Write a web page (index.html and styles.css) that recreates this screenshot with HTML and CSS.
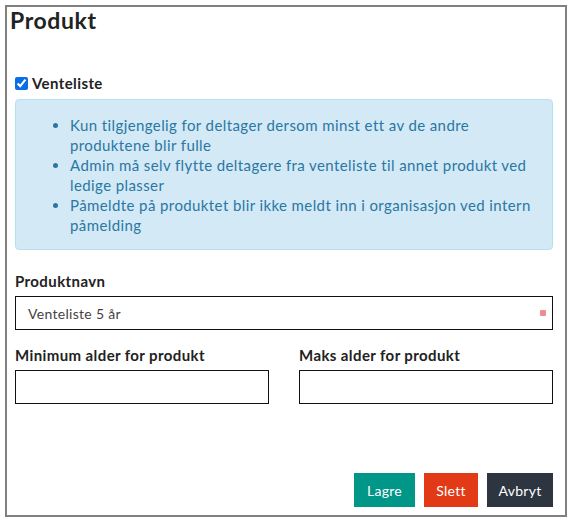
FILE: index.html
```html
<!DOCTYPE html>
<html lang="no">
<head>
<meta charset="utf-8">
<link rel="stylesheet" href="styles.css">
</head>
<body>
<div class="dialog">
  <h1 class="title">Produkt</h1>
  <label class="check">
    <input type="checkbox" checked>
    <span>Venteliste</span>
  </label>
  <div class="alert">
    <ul>
      <li>Kun tilgjengelig for deltager dersom minst ett av de andre produktene blir fulle</li>
      <li>Admin må selv flytte deltagere fra venteliste til annet produkt ved ledige plasser</li>
      <li>Påmeldte på produktet blir ikke meldt inn i organisasjon ved intern påmelding</li>
    </ul>
  </div>
  <div class="field">
    <label class="label">Produktnavn</label>
    <div class="input-wrap">
      <input class="input" type="text" value="Venteliste 5 år">
      <span class="req"></span>
    </div>
  </div>
  <div class="row">
    <div class="field">
      <label class="label">Minimum alder for produkt</label>
      <input class="input" type="text">
    </div>
    <div class="field">
      <label class="label">Maks alder for produkt</label>
      <input class="input" type="text">
    </div>
  </div>
  <div class="actions">
    <button class="btn btn-save">Lagre</button>
    <button class="btn btn-delete">Slett</button>
    <button class="btn btn-cancel">Avbryt</button>
  </div>
</div>
</body>
</html>
```
FILE: styles.css
```css
* { box-sizing: border-box; }
html, body { margin: 0; padding: 0; background: #fff; }
body { font-family: Lato, "Open Sans", sans-serif; color: #333; letter-spacing: 0.4px; }
.dialog {
  margin: 5px;
  width: 562px;
  height: 512px;
  border: 2px solid #808080;
  padding: 0 12px 0 8px;
  display: flex;
  flex-direction: column;
}
.title {
  margin: 0 0 0 -5px;
  font-size: 23px;
  font-weight: 700;
  color: #222;
  line-height: 26px;
  letter-spacing: 0.6px;
  height: 65px;
}
.check {
  display: flex;
  align-items: center;
  gap: 4px;
  font-weight: 700;
  font-size: 15px;
  color: #222;
  height: 22px;
}
.check input { margin: 0; width: 13px; height: 13px; accent-color: #0a6ee8; }
.alert {
  margin-top: 5px;
  background: #d3e9f6;
  border: 1px solid #b4e1ef;
  border-radius: 4px;
  color: #2a77a3;
  font-size: 15px;
  line-height: 20px;
  padding: 15px 0 15px 0;
  height: 151px;
}
.alert ul { margin: 0; padding-left: 54px; padding-right: 20px; }
.field { display: flex; flex-direction: column; }
.label {
  font-weight: 700;
  font-size: 15px;
  color: #222;
  line-height: 20px;
  margin-bottom: 5px;
}
.alert + .field { margin-top: 21px; }
.input-wrap { position: relative; }
.input {
  width: 100%;
  height: 34px;
  border: 1px solid #111;
  border-radius: 0;
  padding: 0 12px;
  font-family: inherit;
  font-size: 14px;
  letter-spacing: 0.3px;
  color: #444;
  background: #fff;
  outline: none;
}
.req {
  position: absolute;
  right: 7px;
  top: 14px;
  width: 6px;
  height: 6px;
  border-radius: 1px;
  background: #f28b8f;
}
.row {
  display: grid;
  grid-template-columns: 254px 254px;
  column-gap: 30px;
  margin-top: 15px;
}
.actions {
  margin-top: auto;
  margin-bottom: 8px;
  display: flex;
  justify-content: flex-end;
  gap: 9px;
}
.btn {
  border: none;
  height: 34px;
  color: #fff;
  font-family: inherit;
  font-size: 14px;
  letter-spacing: 0.3px;
  padding: 0;
  border-radius: 0;
}
.btn-save { background: #009688; width: 61px; }
.btn-delete { background: #e23a17; width: 54px; }
.btn-cancel { background: #2d3540; width: 66px; }
```
